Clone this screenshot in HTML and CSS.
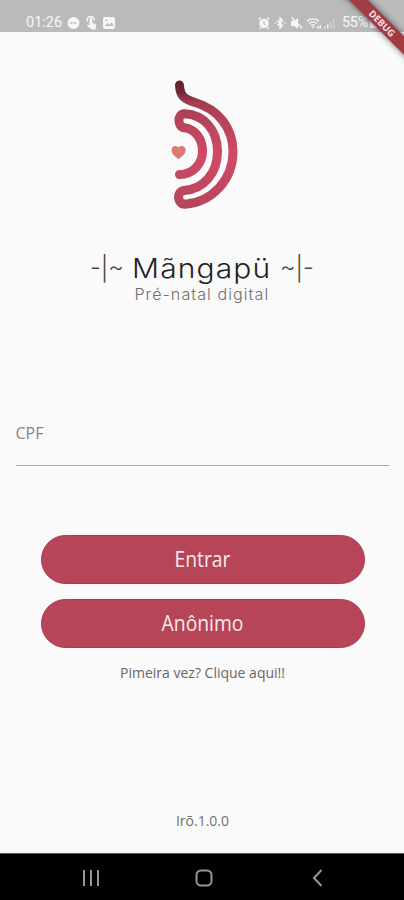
FILE: index.html
```
<!DOCTYPE html>
<html lang="pt-BR">
<head>
<meta charset="utf-8">
<title>Mãngapü</title>
<link rel="stylesheet" href="styles.css">
</head>
<body>
<div class="app">
  <header class="status">
    <span class="clock">01:26</span>
    <svg class="left-icons" width="50" height="14" viewBox="0 0 50 14">
      <circle cx="6.5" cy="7" r="6"/>
      <path class="cut" d="M3.5 6h1.4v1.7H3.5zM5.8 6h1.4v1.7H5.8zM8.1 6h1.4v1.7H8.1z"/>
      <path d="M22.500 6V3a1.400 1.400 0 0 1 2.800 0v4l4 1.500-.8 5h-4L19.800 9.500l1-1 1.700.8z"/>
      <path class="line" d="M20.600 5.500a3.500 3.500 0 1 1 6.500-1"/>
      <rect x="36" y="1" width="12" height="12" rx="2"/>
      <path class="cut" d="M38 10l2.500-3 2 2 2-2.500 2.500 3.500zM38.500 3.500h2v1.500h-2z"/>
    </svg>
    <svg class="right-icons" width="82" height="14" viewBox="0 0 82 14">
      <circle cx="7" cy="7.500" r="4.800"/>
      <path class="line" d="M1.800 3.500l2.200-2M12.200 3.500L10 1.500M3.500 11.500L2.500 13M10.500 11.500l1 1.500"/>
      <path class="cut-line" d="M7 4.700v3l1.800 1"/>
      <path class="line" d="M20.500 4.500l5 5L23 12V2l2.500 2.500-5 5M18 7h1.300M27.200 7h1.300"/>
      <path d="M34 5h3L41 2v11l-4-3h-3z"/>
      <path class="line" d="M34.500 1.500L45 12"/>
      <path class="line" d="M50 5.200a9 9 0 0 1 12 0M52 7.500a6 6 0 0 1 8 0M54 9.500a3 3 0 0 1 4 0"/>
      <path d="M54.500 10.500h3L56 12.500zM60 10h1.500v2.500H60zM62.500 9H64v3.500h-1.500zM67 10.500h1.500v2H67zM70 8.500h1.500v4H70z"/>
      <path class="dim" d="M73 6h1.500v6.500H73zM76 3h1.500v9.500H76z"/>
    </svg>
    <span class="battery">55%</span>
    <span class="cell"></span>
  </header>

  <main class="content">
    <svg class="logo" width="74" height="134" viewBox="168 78 74 134">
      <defs>
        <linearGradient id="rose" gradientUnits="userSpaceOnUse" x1="0" y1="80" x2="0" y2="210">
          <stop offset="0" stop-color="#5e1e2a"/>
          <stop offset=".1" stop-color="#74283a"/>
          <stop offset=".17" stop-color="#a43c50"/>
          <stop offset=".34" stop-color="#b9445b"/>
          <stop offset=".58" stop-color="#d04a66"/>
          <stop offset=".8" stop-color="#c2475f"/>
          <stop offset="1" stop-color="#b24658"/>
        </linearGradient>
      </defs>
      <path class="stroke" d="M179.500 85C180 96 184 99 195 102.500C218 109 233 128 233 151.500C233 180 212 202 185 204.300C177 204 176 191.500 184 190.500C204 189 217.500 173 217.500 151.500C217.500 130 204 114.500 184.500 113.700C177 114 177 127 184.500 127.800C195 129 202.500 139 202.500 151C202.500 164 193 174.500 179.500 174.500"/>
      <path class="heart" d="M178.500 159c-3-2.200-7-5-7-8.800 0-4.600 5-5.700 7-2.400 2-3.300 7.200-2.200 7.200 2.400 0 3.800-4.200 6.600-7.200 8.800z"/>
    </svg>
    <h1 class="title"><span class="mark">-|~</span><span class="name">Mãngapü</span><span class="mark">~|-</span></h1>
    <p class="subtitle">Pré-natal digital</p>
    <label class="field">CPF</label>
    <div class="actions">
      <button class="button"><span>Entrar</span></button>
      <button class="button anonymous"><span>Anônimo</span></button>
    </div>
    <p class="signup">Pimeira vez? Clique aqui!!</p>
    <p class="version">Irō.1.0.0</p>
  </main>

  <nav class="navbar">
    <svg width="404" height="46" viewBox="0 0 404 46">
      <path d="M84 16v16M91 16v16M98 16v16"/>
      <rect x="196.500" y="16.500" width="15" height="15" rx="4.500"/>
      <path d="M321.500 16l-7.500 8 7.500 8"/>
    </svg>
  </nav>
  <div class="ribbon">DEBUG</div>
</div>
</body>
</html>
```
FILE: styles.css
```
* { box-sizing: border-box; }
body { margin: 0; }
.app {
  position: relative;
  display: flex;
  flex-direction: column;
  width: 404px;
  height: 900px;
  overflow: hidden;
  background: #fafafa;
  font-family: "Open Sans", "Noto Sans", sans-serif;
}
.status {
  display: flex;
  align-items: center;
  height: 32px;
  padding: 13px 0 0 26px;
  background: #bababa;
  color: #f6f6f6;
  font: 14.500px/18px Roboto, sans-serif;
}
.clock { width: 41px; }
.left-icons, .right-icons { fill: #f6f6f6; }
.right-icons { margin-left: 140px; }
.status .line { fill: none; stroke: #f6f6f6; stroke-width: 1.400; }
.status .cut { fill: #bababa; }
.status .cut-line { fill: none; stroke: #bababa; stroke-width: 1.200; }
.status .dim { opacity: .35; }
.battery { margin-left: 3px; letter-spacing: -.3px; }
.cell { width: 8px; height: 11px; margin-left: 2px; border-radius: 1px; background: #f6f6f6; }
.content {
  display: flex;
  flex: 1;
  flex-direction: column;
  align-items: center;
}
.logo { margin: 46px 0 0 6px; }
.stroke { fill: none; stroke: url(#rose); stroke-width: 9; stroke-linecap: round; stroke-linejoin: round; }
.heart { fill: #dc7972; }
.title {
  display: flex;
  justify-content: space-between;
  width: 224px;
  margin: 39px 0 0;
  color: #222;
  font: 300 27px/36px Inter, sans-serif;
  white-space: nowrap;
}
.mark { color: #444; font-size: 24px; }
.name { letter-spacing: 1px; transform: scaleX(1.11); }
.subtitle {
  margin: -2px 0 0;
  color: #707070;
  font: 300 15.500px/20px Inter, sans-serif;
  letter-spacing: 1px;
  transform: scaleX(1.04);
}
.field {
  width: 373px;
  height: 45px;
  margin-top: 116px;
  border-bottom: 1px solid #a8a8a8;
  color: #858585;
  font-size: 16px;
  line-height: 24px;
}
.actions { display: grid; gap: 15px; margin: 69px 0 0 1px; }
.button {
  width: 324px;
  height: 49px;
  padding: 0;
  border: 1px solid #b23750;
  border-radius: 25px;
  background: #b54557;
  color: #fbe9ec;
  font: 21px/47px "Open Sans", sans-serif;
}
.button span { display: inline-block; transform: scaleX(.92); }
.signup { margin: 14px 0 0 1px; color: #666; font-size: 14px; line-height: 22px; }
.version { margin: auto 0 21px 1px; color: #707070; font-size: 14px; line-height: 22px; }
.navbar { height: 47px; border-top: 1px solid #555; background: #000; }
.navbar svg { display: block; fill: none; stroke: #969696; stroke-width: 2; }
.ribbon {
  position: absolute;
  top: 17px;
  left: 322px;
  width: 120px;
  height: 13px;
  background: #a33b42;
  box-shadow: 0 0 6px rgba(0, 0, 0, .6);
  color: #f5dfe1;
  font: 700 9.500px/13px "Open Sans", sans-serif;
  text-align: center;
  transform: rotate(45deg);
}
```
